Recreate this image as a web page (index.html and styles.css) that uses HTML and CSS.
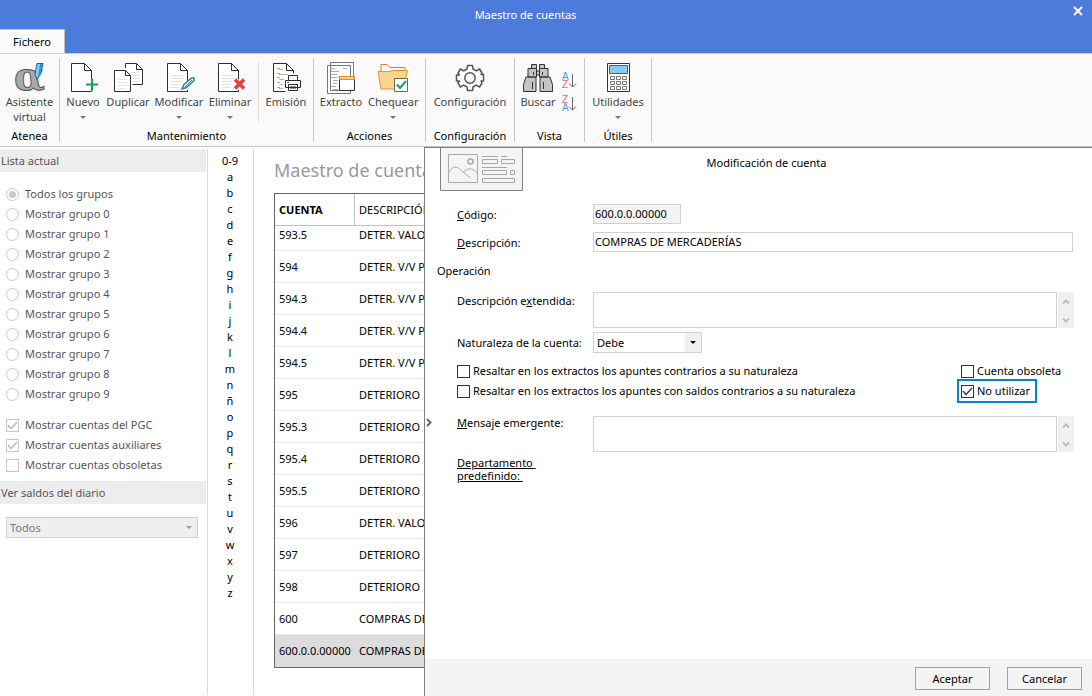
FILE: index.html
```html
<!DOCTYPE html>
<html lang="es">
<head>
<meta charset="utf-8">
<title>Maestro de cuentas</title>
<link rel="stylesheet" href="styles.css">
</head>
<body>
<svg class="defs" aria-hidden="true">
  <symbol id="doc" viewBox="0 0 30 32"><path d="M1.500 1.500h13l7 7v21h-20z" fill="#fff"/><path d="M21.500 23v-14.500l-7-7h-13v28h20v-1.500M14.500 1.500v7h7" fill="none" stroke="#2e2e2e"/></symbol>
  <symbol id="lines" viewBox="0 0 30 32"><path d="M5 13.500h12M5 16.500h13M5 19.500h11M5 22.500h9M5 25.500h8" fill="none" stroke="#e2e2e2"/></symbol>
  <symbol id="up" viewBox="0 0 8 5"><path d="M1 4.500L4 1.500L7 4.500" fill="none" stroke="#bdbdbd" stroke-width="2"/></symbol>
  <symbol id="down" viewBox="0 0 8 5"><path d="M1 .5L4 3.500L7 .5" fill="none" stroke="#bdbdbd" stroke-width="2"/></symbol>
</svg>
<div class="app">
  <header class="titlebar">
    <div class="tabs"><button class="tab">Fichero</button></div>
    <h1 class="window-title">Maestro de cuentas</h1>
    <button class="close" aria-label="Cerrar"><svg width="10" height="10" viewBox="0 0 10 10"><path d="M1 1l8 8M9 1l-8 8" stroke="#fff" stroke-width="2"/></svg></button>
  </header>
  <nav class="ribbon">
    <section class="group atenea">
      <div class="tools">
        <button class="tool">
          <svg width="30" height="32" viewBox="0 0 30 32"><text x="-1" y="28" class="alpha">α</text><path d="M22 1.500h6l-2 10-4 6-2-5z" fill="#8cc9f2" stroke="#1666a5"/><path d="M25 2h2.500l-2 9-2.500 4z" fill="#2f8fd3"/></svg>
          <span>Asistente<br>virtual</span>
        </button>
      </div>
      <h2>Atenea</h2>
    </section>
    <section class="group mantenimiento">
      <div class="tools">
        <button class="tool w46"><svg width="26" height="32" viewBox="0 0 26 32"><use href="#doc" width="30" height="32"/><path d="M16 22.500h12M22 16.500v12" stroke="#13a04a" stroke-width="2"/></svg><span>Nuevo</span><i class="caret"></i></button>
        <button class="tool w44"><svg width="30" height="32" viewBox="0 0 30 32"><path d="M12.500 6v-4.500h11l6 6v15h-10M23.500 1.500v6h6" fill="#fff" stroke="#2e2e2e"/><path d="M18 10.500h8M19 13.500h8M20 16.500h7M20 19.500h7" stroke="#e2e2e2"/><path d="M1.500 8.500h11l5 5v16h-16zM12.500 8.500v5h5" fill="#fff" stroke="#2e2e2e"/><path d="M5 17.500h9M5 20.500h10M5 23.500h9M5 26.500h8" stroke="#e2e2e2"/></svg><span>Duplicar</span></button>
        <button class="tool w58"><svg width="26" height="32" viewBox="0 0 26 32"><use href="#doc" width="30" height="32"/><use href="#lines" width="30" height="32"/><path d="M16 27l2-4.500 7.500-6.500h2.500v2.500l-7.500 7z" fill="#fff" stroke="#1c84c6" stroke-width="1.500"/><path d="M19 25l7-7" stroke="#1c84c6"/></svg><span>Modificar</span><i class="caret"></i></button>
        <button class="tool w44"><svg width="26" height="32" viewBox="0 0 26 32"><use href="#doc" width="30" height="32"/><use href="#lines" width="30" height="32"/><path d="M18 17l9 10M27 17l-9 10" stroke="#fafafa" stroke-width="5"/><path d="M18 17.500l9 9M27 17.500l-9 9" stroke="#ee3a3a" stroke-width="3.500"/></svg><span>Eliminar</span><i class="caret"></i></button>
        <div class="rule"></div>
        <button class="tool w54"><svg width="30" height="32" viewBox="0 0 30 32"><path d="M14.500 29.500h-12v-28h13l7 7v3M15.500 1.500v7h7" fill="#fff" stroke="#2e2e2e"/><path d="M6 6.500h3M6 11.500h3M6 15.500h3M6 20.500h3M6 25.500h3" stroke="#eaa02c"/><path d="M8 7.500h4M8 12.500h9M8 17.500h5M8 22.500h4M8 26.500h4" stroke="#b5b5b5"/><path d="M17.500 18v-4.500h9v4.500M14.500 18.500h15v7h-15zM17.500 22.500h9v6h-9z" fill="#fff" stroke="#2e2e2e"/><path d="M19 24.500h6M19 26.500h6" stroke="#999"/><path d="M16 20.500h2" stroke="#1c84c6"/></svg><span>Emisión</span></button>
      </div>
      <h2>Mantenimiento</h2>
    </section>
    <section class="group acciones">
      <div class="tools">
        <button class="tool w54"><svg width="30" height="32" viewBox="0 0 30 32"><path d="M4.500.5h23v28h-23zM1.500 3.500h23v28h-23z" fill="#fff" stroke="#777"/><path d="M4 6.500h5M17 6.500h4M5 9.500h8M4 12.500h7M5 15.500h6M7 18.500h5M7 21.500h4M5 24.500h5M7 27.500h5" stroke="#aaa"/><path d="M13.500 14.500h15v14h-15z" fill="#fff" stroke="#2e2e2e"/><path d="M13.500 14.500h15v3h-15z" fill="#f8cf80" stroke="#e58a2b"/></svg><span>Extracto</span></button>
        <button class="tool w50"><svg width="32" height="32" viewBox="0 0 32 32"><path d="M4 9v-6.500h6l3 3h15v4" fill="#fff" stroke="#e87830"/><path d="M1 9.500h12l2-1h15.500l-4 18.500h-22.500z" fill="#f7d68d" stroke="#e8913d"/><path d="M17.500 16.500h13v13h-13z" fill="#fff" stroke="#666"/><path d="M20 22.500l3 3.500l6-7" fill="none" stroke="#18a24b" stroke-width="2"/></svg><span>Chequear</span><i class="caret"></i></button>
      </div>
      <h2>Acciones</h2>
    </section>
    <section class="group configuracion">
      <div class="tools">
        <button class="tool"><svg width="30" height="32" viewBox="-15 -16 30 32"><path d="M-3-9L-2.500-12.500H2.500L3-9L6.300-7.100L9.600-9L12-5L11-3.500H13.500V3H11L12 5L9.600 9L6.300 7.100L3 9L2.500 12.500H-2.500L-3 9L-6.300 7.100L-9.600 9L-12 5L-10.500 3H-13.500V-3H-10.500L-12-5L-9.600-9L-6.300-7.100Z" fill="#fff" stroke="#555" stroke-width="1.500" stroke-linejoin="round"/><circle r="5.200" fill="#fafafa" stroke="#555" stroke-width="1.500"/></svg><span>Configuración</span></button>
      </div>
      <h2>Configuración</h2>
    </section>
    <section class="group vista">
      <div class="tools">
        <button class="tool w46"><svg width="30" height="32" viewBox="0 0 30 32"><path d="M8.500 2.500h5v4h-5zM16.500 2.500h5v4h-5zM5 6.500h8.500v8.500h-8.500zM16.500 6.500h8.500v8.500h-8.500zM3 15h10v14.500h-12.500v-7zM17 15h10l2.500 7.500v7h-12.500zM13.500 9h3v4h-3z" fill="#c4c4c4" stroke="#333"/><path d="M9.500 20v7M20.500 20v7M10.500 10v3M19.500 10v3" stroke="#333"/></svg><span>Buscar</span></button>
        <div class="sorts">
          <button class="sort" aria-label="Orden ascendente"><svg width="16" height="18" viewBox="0 0 16 18"><text x="1" y="8" class="sort-a">A</text><text x="1" y="16" class="sort-z">Z</text><path d="M11.500 2v13M8 11.500l3.500 3.500l3.500-3.500" fill="none" stroke="#666"/></svg></button>
          <button class="sort" aria-label="Orden descendente"><svg width="16" height="18" viewBox="0 0 16 18"><text x="1" y="8" class="sort-z">Z</text><text x="1" y="16" class="sort-a">A</text><path d="M11.500 2v13M8 11.500l3.500 3.500l3.500-3.500" fill="none" stroke="#666"/></svg></button>
        </div>
      </div>
      <h2>Vista</h2>
    </section>
    <section class="group utiles">
      <div class="tools">
        <button class="tool"><svg width="30" height="32" viewBox="0 0 30 32"><path d="M4.500 1.500h22v28h-22z" fill="#fff" stroke="#333"/><path d="M6.500 3.500h18v8h-18z" fill="#8fc8ef" stroke="#1c6ea8"/><path d="M7.500 14.500h4v3h-4zM13.500 14.500h4v3h-4zM19.500 14.500h4v3h-4zM7.500 19.500h4v3h-4zM13.500 19.500h4v3h-4zM19.500 19.500h4v3h-4zM7.500 24.500h4v3h-4zM13.500 24.500h4v3h-4zM19.500 24.500h4v3h-4z" fill="#fff" stroke="#777"/></svg><span>Utilidades</span><i class="caret"></i></button>
      </div>
      <h2>Útiles</h2>
    </section>
  </nav>
  <main class="workspace">
    <aside class="sidebar">
      <h2>Lista actual</h2>
      <div class="options groups">
        <label><input type="radio" name="g" checked>Todos los grupos</label>
        <label><input type="radio" name="g">Mostrar grupo 0</label>
        <label><input type="radio" name="g">Mostrar grupo 1</label>
        <label><input type="radio" name="g">Mostrar grupo 2</label>
        <label><input type="radio" name="g">Mostrar grupo 3</label>
        <label><input type="radio" name="g">Mostrar grupo 4</label>
        <label><input type="radio" name="g">Mostrar grupo 5</label>
        <label><input type="radio" name="g">Mostrar grupo 6</label>
        <label><input type="radio" name="g">Mostrar grupo 7</label>
        <label><input type="radio" name="g">Mostrar grupo 8</label>
        <label><input type="radio" name="g">Mostrar grupo 9</label>
      </div>
      <div class="options kinds">
        <label><input type="checkbox" checked>Mostrar cuentas del PGC</label>
        <label><input type="checkbox" checked>Mostrar cuentas auxiliares</label>
        <label><input type="checkbox">Mostrar cuentas obsoletas</label>
      </div>
      <h2>Ver saldos del diario</h2>
      <select class="journal" aria-label="Ver saldos del diario"><option>Todos</option></select>
    </aside>
    <nav class="letters">
      <a href="#">0-9</a><a href="#">a</a><a href="#">b</a><a href="#">c</a><a href="#">d</a><a href="#">e</a><a href="#">f</a><a href="#">g</a><a href="#">h</a><a href="#">i</a><a href="#">j</a><a href="#">k</a><a href="#">l</a><a href="#">m</a><a href="#">n</a><a href="#">ñ</a><a href="#">o</a><a href="#">p</a><a href="#">q</a><a href="#">r</a><a href="#">s</a><a href="#">t</a><a href="#">u</a><a href="#">v</a><a href="#">w</a><a href="#">x</a><a href="#">y</a><a href="#">z</a>
    </nav>
    <section class="accounts">
      <h2>Maestro de cuentas</h2>
      <table>
        <thead><tr><th class="sorted">CUENTA</th><th>DESCRIPCIÓN</th></tr></thead>
        <tbody>
          <tr class="partial"><td>593.5</td><td>DETER. VALORES</td></tr>
          <tr><td>594</td><td>DETER. V/V PARTES</td></tr>
          <tr><td>594.3</td><td>DETER. V/V PARTES</td></tr>
          <tr><td>594.4</td><td>DETER. V/V PARTES</td></tr>
          <tr><td>594.5</td><td>DETER. V/V PARTES</td></tr>
          <tr><td>595</td><td>DETERIORO</td></tr>
          <tr><td>595.3</td><td>DETERIORO</td></tr>
          <tr><td>595.4</td><td>DETERIORO</td></tr>
          <tr><td>595.5</td><td>DETERIORO</td></tr>
          <tr><td>596</td><td>DETER. VALORES</td></tr>
          <tr><td>597</td><td>DETERIORO</td></tr>
          <tr><td>598</td><td>DETERIORO</td></tr>
          <tr><td>600</td><td>COMPRAS DE</td></tr>
          <tr class="selected"><td>600.0.0.00000</td><td>COMPRAS DE</td></tr>
        </tbody>
      </table>
    </section>
    <form class="dialog">
      <header class="dialog-head">
        <svg class="card" width="83" height="43" viewBox="0 0 83 43"><path d="M.5 0v42.500h82v-42.500" fill="#f4f4f4" stroke="#808080"/><g fill="none" stroke="#a8a8a8"><path d="M8.500 6.500h29v28h-29z"/><circle cx="30.500" cy="13.500" r="2.500" stroke-width="1.500"/><path d="M8.500 25c3-6 8-8 12-3l10 8M23.500 24c4-4 8-5 14 1"/><path d="M42 8.500h16M61 8.500h6M42.500 11.500h15v4h-15zM61.500 11.500h13v4h-13zM42 19.500h25M42.500 22.500h24v4h-24zM70.500 22.500h4v4h-4zM42.500 30.500h32v4h-32z"/></g></svg>
        <h2>Modificación de cuenta</h2>
      </header>
      <button type="button" class="expand" aria-label="Expandir"><svg width="6" height="9" viewBox="0 0 6 9"><path d="M1 1l3.500 3.500L1 8" fill="none" stroke="#666" stroke-width="2"/></svg></button>
      <div class="fields">
        <label for="codigo"><u>C</u>ódigo:</label>
        <input id="codigo" class="code" type="text" value="600.0.0.00000" readonly>
        <label for="desc"><u>D</u>escripción:</label>
        <input id="desc" class="desc" type="text" value="COMPRAS DE MERCADERÍAS">
        <h3>Operación</h3>
        <label for="ext" class="top">Descripción e<u>x</u>tendida:</label>
        <div class="memo ext"><textarea id="ext"></textarea><div class="scroll"><svg width="8" height="5"><use href="#up"/></svg><svg width="8" height="5"><use href="#down"/></svg></div></div>
        <label for="nat">Naturaleza de la cuenta:</label>
        <select id="nat" class="nature"><option>Debe</option></select>
        <div class="checks">
          <div class="options">
            <label><input type="checkbox">Resaltar en los extractos los apuntes contrarios a su naturaleza</label>
            <label><input type="checkbox">Resaltar en los extractos los apuntes con saldos contrarios a su naturaleza</label>
          </div>
          <div class="options status">
            <label><input type="checkbox">Cuenta obsoleta</label>
            <label class="marked"><input type="checkbox" checked>No utilizar</label>
          </div>
        </div>
        <label for="msg" class="message"><u>M</u>ensaje emergente:</label>
        <div class="memo"><textarea id="msg"></textarea><div class="scroll"><svg width="8" height="5"><use href="#up"/></svg><svg width="8" height="5"><use href="#down"/></svg></div></div>
        <a class="dept" href="#">Departamento&nbsp;<br>predefinido:&nbsp;</a>
      </div>
      <footer class="actions"><button type="button">Aceptar</button><button type="button">Cancelar</button></footer>
    </form>
  </main>
</div>
</body>
</html>
```

FILE: styles.css
```css
* { box-sizing: border-box; }
body { margin: 0; font: 11px/16px "Noto Sans", "Open Sans", sans-serif; color: #000; background: #fff; }
h1, h2, h3 { margin: 0; font-size: 11px; font-weight: 400; }
button, input, select, textarea { font: inherit; color: inherit; border-radius: 0; margin: 0; padding: 0; }
button { border: 0; background: none; }
a { color: inherit; text-decoration: none; }
.defs { position: absolute; width: 0; height: 0; }
.app { display: flex; flex-direction: column; min-height: 100vh; }

.titlebar { display: flex; height: 53px; background: #4d7bdb; color: #fff; }
.tabs { display: flex; align-items: flex-end; width: 65px; }
.tab { width: 65px; height: 24px; background: #fafafa; color: #000; border-top: 1px solid #b8c0d0; border-right: 1px solid #c0c0c0; }
.window-title { flex: 1; padding: 7px 106px 0 0; text-align: center; }
.close { align-self: flex-start; width: 28px; height: 22px; margin-left: -28px; display: flex; align-items: center; justify-content: center; }

.ribbon { display: flex; height: 94px; padding: 4px 0; background: #fafafa; border-top: 1px solid #d0d4da; border-bottom: 1px solid #c4c6c6; }
.group { display: flex; flex-direction: column; border-right: 1px solid #c8c8c8; }
.group h2 { text-align: center; line-height: 12px; }
.tools { display: flex; height: 74px; padding-top: 4px; }
.tool { display: flex; flex: 1; flex-direction: column; align-items: center; color: #444; line-height: 15px; white-space: nowrap; }
.tool svg { overflow: visible; }
.w44 { flex: 0 0 44px; } .w46 { flex: 0 0 46px; } .w50 { flex: 0 0 50px; } .w54 { flex: 0 0 54px; } .w58 { flex: 0 0 58px; }
.atenea { width: 60px; } .mantenimiento { width: 254px; } .acciones { width: 112px; }
.configuracion { width: 89px; } .vista { width: 70px; } .utiles { width: 67px; }
.rule { width: 1px; height: 60px; margin-left: 6px; background: #ddd; }
.caret { border: 3px solid transparent; border-top-color: #777; border-bottom: 0; margin-top: 7px; }
.sorts { display: flex; flex-direction: column; gap: 5px; padding-top: 10px; }
.sort { height: 18px; }
.sort svg { display: block; }
.alpha { font: bold 40px "DejaVu Serif", serif; fill: #aaa; stroke: #555; stroke-width: 1px; }
.sort-a, .sort-z { font: 10px "Liberation Sans", sans-serif; }
.sort-a { fill: #4a9ed6; } .sort-z { fill: #ee6666; }

.workspace { display: flex; flex: 1; }
.sidebar { width: 206px; padding-top: 2px; color: #555; }
.sidebar h2 { height: 23px; line-height: 23px; padding-left: 1px; background: #ededed; }
.options label { display: flex; align-items: center; gap: 3px; height: 20px; white-space: nowrap; }
.sidebar .options label { gap: 6px; }
.options.groups { padding: 12px 0 0 6px; }
.options.kinds { padding: 11px 0 6px 6px; }
input[type=checkbox], input[type=radio] { appearance: none; display: grid; place-content: center; flex: none; width: 13px; height: 13px; background: #fff; border: 1px solid #333; }
.sidebar input[type=checkbox], .sidebar input[type=radio] { border-color: #c8c8c8; }
input[type=radio] { border-radius: 50%; }
input[type=radio]:checked::before { content: ""; width: 7px; height: 7px; border-radius: 50%; background: #c8c8c8; }
input[type=checkbox]:checked { background: url("data:image/svg+xml,%3Csvg xmlns='http://www.w3.org/2000/svg' width='11' height='11'%3E%3Cpath d='M1 5l3 3.500L10 2' fill='none' stroke='%23444' stroke-width='1.500'/%3E%3C/svg%3E") center no-repeat; }
.sidebar input[type=checkbox]:checked { background-image: url("data:image/svg+xml,%3Csvg xmlns='http://www.w3.org/2000/svg' width='11' height='11'%3E%3Cpath d='M1 5l3 3.500L10 2' fill='none' stroke='%23bbb' stroke-width='1.500'/%3E%3C/svg%3E"); }
select { appearance: none; height: 21px; border: 1px solid #d0d0d0; }
.journal { display: block; width: 192px; margin: 13px 0 0 6px; padding-left: 3px; color: #777; background: #efefef url("data:image/svg+xml,%3Csvg xmlns='http://www.w3.org/2000/svg' width='6' height='3'%3E%3Cpath d='M0 0h6L3 3z' fill='%23999'/%3E%3C/svg%3E") right 5px center no-repeat; }

.letters { display: flex; flex-direction: column; width: 47px; margin: 2px 0 1px 1px; padding: 4px 1px 0 0; text-align: center; border: 1px solid #dadada; border-width: 0 1px; }

.accounts { width: 170px; padding: 11px 0 0 20px; overflow: hidden; }
.accounts h2 { height: 35px; font-size: 18px; line-height: 25px; color: #999; white-space: nowrap; }
table { width: 300px; table-layout: fixed; border: 1px solid #666; border-collapse: separate; border-spacing: 0; }
th, td { height: 32px; padding: 0 4px; text-align: left; line-height: 16px; border-bottom: 1px solid #eaeaea; white-space: nowrap; font-weight: 400; }
th { border-bottom-color: #c0c0c0; }
th.sorted { width: 80px; font-weight: 700; border-right: 1px solid #c0c0c0; }
td:first-child { padding-right: 0; }
.partial td { height: 25px; padding-bottom: 7px; }
.selected td { background: #dcdcdc; border-bottom-color: #dcdcdc; }

.dialog { position: relative; display: flex; flex: 1; flex-direction: column; background: #fff; border: 1px solid #808080; border-width: 1px 0 0 1px; }
.dialog-head { display: flex; padding-left: 15px; }
.card { flex: none; }
.dialog-head h2 { flex: 1; padding: 7px 82px 0 0; text-align: center; }
.expand { position: absolute; left: 0; top: 270px; width: 8px; height: 9px; }
.expand svg { display: block; margin-left: 1px; }
.fields { display: grid; grid-template-columns: 136px 1fr; align-items: center; align-content: start; flex: 1; padding: 13px 18px 0 32px; }
.fields input[type=text] { height: 20px; margin: 0 1px 8px 0; padding: 0 0 2px 1px; border: 1px solid #d0d0d0; }
.fields > label { padding-bottom: 6px; white-space: nowrap; }
.fields .code { width: 88px; background: #f4f4f4; }
.fields h3 { grid-column: 1 / 3; height: 32px; margin-left: -20px; padding-top: 3px; }
.fields .top { align-self: start; padding-top: 1px; }
.fields .message { align-self: start; }
.memo { display: flex; gap: 1px; height: 36px; }
.memo.ext { margin-bottom: 4px; }
.memo textarea { flex: 1; min-width: 0; resize: none; border: 1px solid #d0d0d0; }
.scroll { display: flex; flex-direction: column; align-items: center; justify-content: space-between; width: 16px; padding: 7px 0 5px; background: #f0f0f0; }
.fields label[for=nat] { padding-bottom: 0; }
.nature { width: 109px; padding-left: 3px; background: url("data:image/svg+xml,%3Csvg xmlns='http://www.w3.org/2000/svg' width='16' height='19'%3E%3Cpath d='M0 0h16v19H0z' fill='%23f0f0f0'/%3E%3Cpath d='M5 8h6L8 11z'/%3E%3C/svg%3E") right center no-repeat; }
.checks { grid-column: 1 / 3; display: flex; justify-content: space-between; padding: 8px 0 15px; }
.status { width: 113px; }
.marked { width: max-content; outline: 2px solid #0a80c8; outline-offset: 2px; padding-right: 3px; }
.options .marked { height: 16px; margin-top: 2px; }
.fields .message { margin-top: -1px; }
.dept { line-height: 13px; text-decoration: underline; padding-top: 4px; }
.actions { display: flex; justify-content: flex-end; gap: 17px; height: 37px; padding: 8px 10px 6px; background: #f4f4f4; }
.actions button { width: 75px; border: 1px solid #a0a0a0; }
```
